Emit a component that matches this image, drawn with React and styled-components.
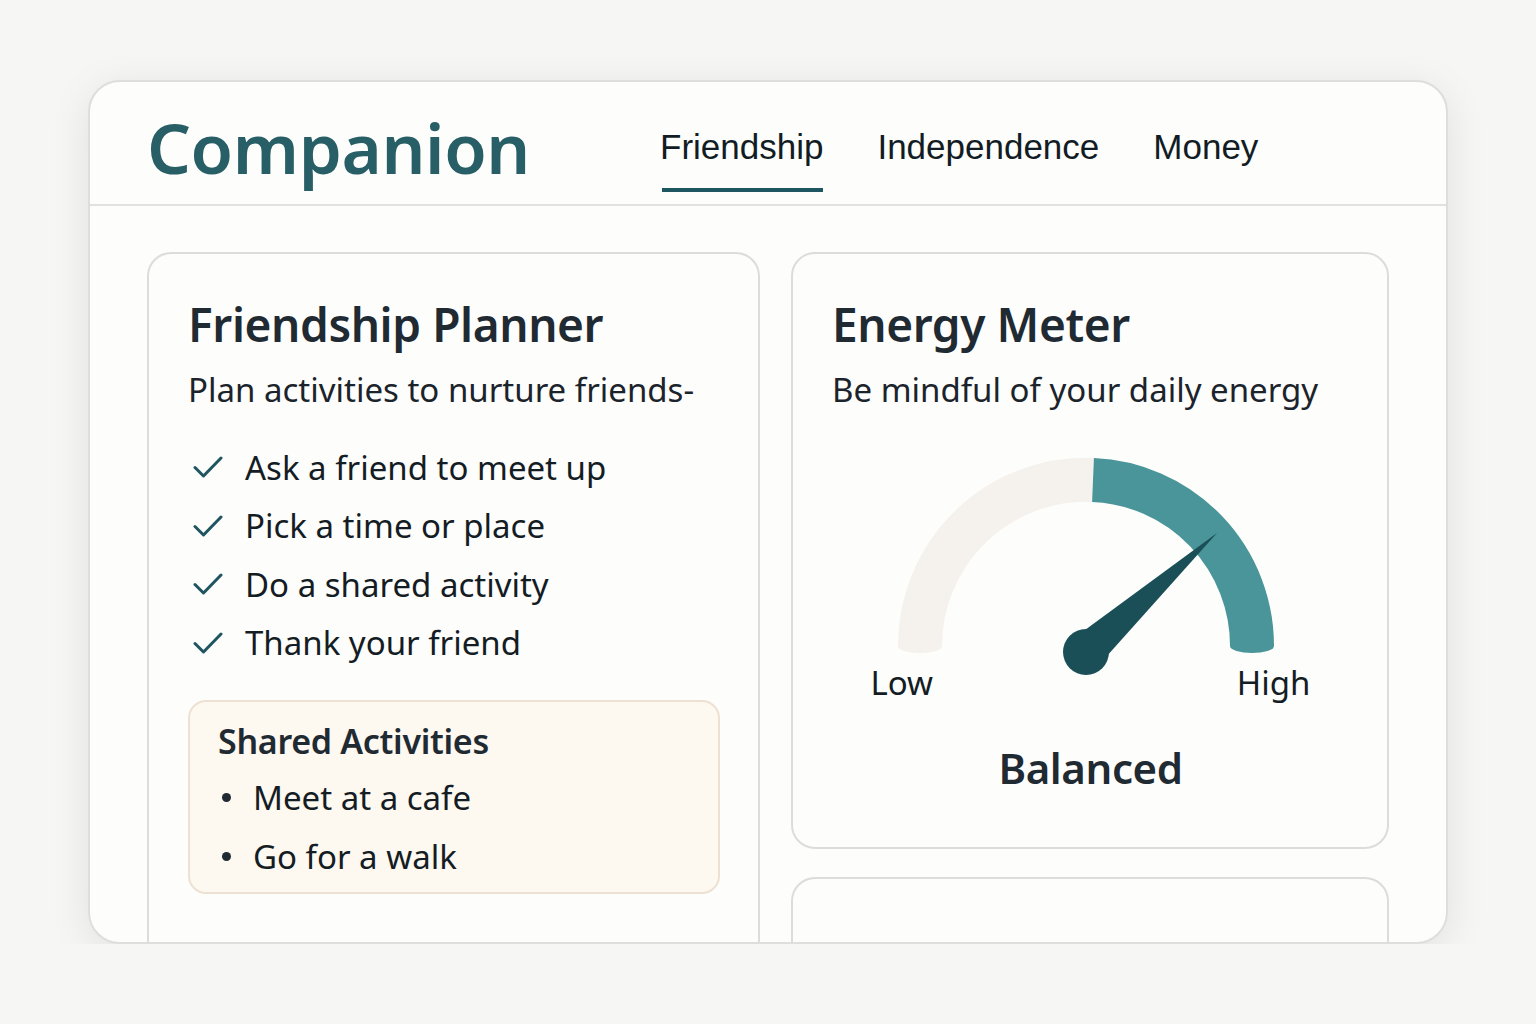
import React from 'react'
import styled, {createGlobalStyle} from 'styled-components'

const GlobalStyle = createGlobalStyle`
  html, body {
    margin: 0;
    padding: 0;
    background: #f6f6f4;
  }
  body {
    font-family: 'Noto Sans', 'Open Sans', sans-serif;
    color: #1f2a33;
  }
`

const Page = styled.div`
  padding: 80px 88px 0;
`

const Window = styled.div`
  height: 864px;
  box-sizing: border-box;
  background: #fdfdfc;
  border: 2px solid #dededc;
  border-radius: 32px;
  box-shadow: 0 8px 40px rgba(0, 0, 0, 0.09);
  overflow: hidden;
  display: flex;
  flex-direction: column;
`

const Header = styled.header`
  flex-shrink: 0;
  height: 124px;
  box-sizing: border-box;
  border-bottom: 2px solid #e1e1df;
  display: flex;
  align-items: stretch;
  padding-left: 57px;
`

const Brand = styled.h1`
  margin: 0;
  width: 513px;
  display: flex;
  align-items: center;
  padding-top: 8px;
  font-family: 'Noto Sans', sans-serif;
  font-size: 69px;
  font-weight: 600;
  letter-spacing: -0.4px;
  color: #285e66;
`

const Tabs = styled.nav`
  display: flex;
  gap: 54px;
`

const Tab = styled.a`
  position: relative;
  display: flex;
  align-items: center;
  padding-top: 8px;
  font-family: 'Liberation Sans', Arial, sans-serif;
  font-size: 35px;
  color: #121c24;
  text-decoration: none;

  &::after {
    content: '';
    display: ${p => (p.$active ? 'block' : 'none')};
    position: absolute;
    left: 2px;
    right: 0;
    bottom: 12px;
    height: 4px;
    background: #1d5560;
  }
`

const Content = styled.main`
  flex: 1;
  min-height: 0;
  display: grid;
  grid-template-columns: 613px 598px;
  gap: 31px;
  padding: 46px 0 0 57px;
`

const Card = styled.section`
  box-sizing: border-box;
  border: 2px solid #dcdcda;
  border-radius: 24px;
  background: #fdfdfc;
  padding: 40px 38px 0 39px;
  ${p => p.$open && 'border-bottom: none; border-bottom-left-radius: 0; border-bottom-right-radius: 0;'}
  ${p => p.$height && `height: ${p.$height}px;`}
`

const Column = styled.div`
  display: flex;
  flex-direction: column;
  gap: 28px;
`

const CardTitle = styled.h2`
  margin: 0;
  font-size: 46px;
  font-weight: 600;
  letter-spacing: -0.4px;
  line-height: 60px;
  color: #1f2a33;
`

const CardSub = styled.p`
  margin: 14px 0 0;
  font-size: 33px;
  line-height: 44px;
  color: #1b232b;
`

const CheckList = styled.ul`
  list-style: none;
  margin: 26px 0 0;
  padding: 0;
`

const CheckItem = styled.li`
  display: flex;
  align-items: center;
  gap: 22px;
  height: 58.5px;
  font-size: 33px;
  color: #141c24;

  svg {
    flex-shrink: 0;
    margin-left: 5px;
  }
`

const SharedBox = styled.div`
  margin-top: 28px;
  background: #fdf8f0;
  border: 2px solid #ede2d2;
  border-radius: 18px;
  padding: 16px 28px 6px;
`

const SharedTitle = styled.h3`
  margin: 0;
  font-size: 34px;
  font-weight: 600;
  letter-spacing: -0.3px;
  line-height: 46px;
  color: #1f2a33;
`

const BulletList = styled.ul`
  list-style: none;
  margin: 4px 0 0;
  padding: 0;
`

const Bullet = styled.li`
  display: flex;
  align-items: center;
  height: 59px;
  font-size: 33px;
  color: #141c24;

  &::before {
    content: '';
    width: 9px;
    height: 9px;
    border-radius: 50%;
    background: #1f2a33;
    margin: 0 22px 0 4px;
  }
`

const Gauge = styled.div`
  margin-top: 42px;
  display: flex;
  flex-direction: column;
  align-items: center;

  svg {
    margin-right: 10px;
  }
`

const GaugeLabels = styled.div`
  width: 440px;
  display: flex;
  justify-content: space-between;
  margin-top: -24px;
  font-size: 33px;
  color: #141c24;
`

const GaugeValue = styled.div`
  margin-top: 34px;
  font-size: 42px;
  font-weight: 600;
  letter-spacing: -0.4px;
  color: #1f2a33;
`

function Check() {
  return (
    <svg width="30" height="24" viewBox="0 0 30 24" fill="none">
      <path
        d="M2 12.5 L10.5 21 L28 3"
        stroke="#1f5560"
        strokeWidth="3"
        strokeLinecap="round"
        strokeLinejoin="round"
      />
    </svg>
  )
}

function EnergyGauge() {
  // dial centre and mid radius of the arc band
  const cx = 200
  const cy = 192
  const r = 166
  return (
    <svg width="400" height="230" viewBox="0 0 400 230">
      <path
        d={`M ${cx - r} ${cy} A ${r} ${r} 0 0 1 ${cx + 7} ${cy - r}`}
        stroke="#f5f1ec"
        strokeWidth="44"
        fill="none"
      />
      <ellipse cx={cx - r} cy={cy} rx="22" ry="7" fill="#f5f1ec" />
      <path
        d={`M ${cx + 7} ${cy - r} A ${r} ${r} 0 0 1 ${cx + r} ${cy}`}
        stroke="#4a9599"
        strokeWidth="44"
        fill="none"
      />
      <ellipse cx={cx + r} cy={cy} rx="22" ry="7" fill="#4a9599" />
      <path
        d={`M ${cx - 16} ${cy - 5} L ${cx + 131} ${cy - 113} L ${cx + 20} ${cy + 11} Z`}
        fill="#1a4f58"
      />
      <circle cx={cx} cy={cy + 6} r="23" fill="#1a4f58" />
    </svg>
  )
}

const checklist = [
  'Ask a friend to meet up',
  'Pick a time or place',
  'Do a shared activity',
  'Thank your friend',
]

const activities = ['Meet at a cafe', 'Go for a walk']

export default function App() {
  return (
    <>
      <GlobalStyle />
      <Page>
        <Window>
          <Header>
            <Brand>Companion</Brand>
            <Tabs>
              <Tab $active>Friendship</Tab>
              <Tab>Independence</Tab>
              <Tab>Money</Tab>
            </Tabs>
          </Header>

          <Content>
            <Card $open>
              <CardTitle>Friendship Planner</CardTitle>
              <CardSub>Plan activities to nurture friends-</CardSub>
              <CheckList>
                {checklist.map(item => (
                  <CheckItem key={item}>
                    <Check />
                    {item}
                  </CheckItem>
                ))}
              </CheckList>
              <SharedBox>
                <SharedTitle>Shared Activities</SharedTitle>
                <BulletList>
                  {activities.map(item => (
                    <Bullet key={item}>{item}</Bullet>
                  ))}
                </BulletList>
              </SharedBox>
            </Card>

            <Column>
              <Card $height={597}>
                <CardTitle>Energy Meter</CardTitle>
                <CardSub>Be mindful of your daily energy</CardSub>
                <Gauge>
                  <EnergyGauge />
                  <GaugeLabels>
                    <span>Low</span>
                    <span>High</span>
                  </GaugeLabels>
                  <GaugeValue>Balanced</GaugeValue>
                </Gauge>
              </Card>
              <Card $open $height={200} />
            </Column>
          </Content>
        </Window>
      </Page>
    </>
  )
}
